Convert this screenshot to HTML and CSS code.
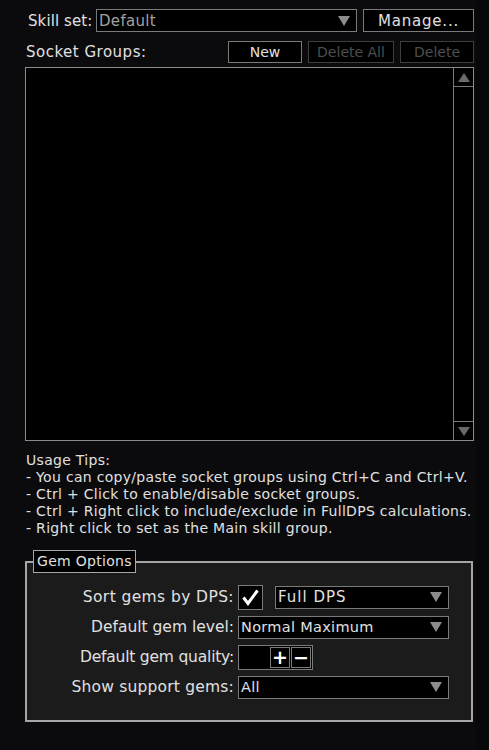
FILE: index.html
```html
<!DOCTYPE html>
<html lang="en">
	<head>
		<meta charset="UTF-8" />
		<title>Skills</title>
		<link rel="stylesheet" href="styles.css">
	</head>
	<body>
		<div class="panel">
			<div class="row top-row">
				<span class="label skill-label">Skill set:</span>
				<div class="dropdown skill-set">
					<span class="dd-text dim">Default</span>
					<span class="arrow"></span>
				</div>
				<button class="btn manage">Manage...</button>
			</div>
			<div class="row groups-row">
				<span class="label groups-label">Socket Groups:</span>
				<div class="spacer"></div>
				<button class="btn new">New</button>
				<button class="btn delete-all" disabled>Delete All</button>
				<button class="btn delete" disabled>Delete</button>
			</div>
			<div class="list">
				<div class="list-body"></div>
				<div class="scrollbar">
					<div class="scroll-btn"><span class="tri up"></span></div>
					<div class="scroll-track"></div>
					<div class="scroll-btn"><span class="tri down"></span></div>
				</div>
			</div>
			<div class="tips">
				<div>Usage Tips:</div>
				<div>- You can copy/paste socket groups using Ctrl+C and Ctrl+V.</div>
				<div>- Ctrl + Click to enable/disable socket groups.</div>
				<div>- Ctrl + Right click to include/exclude in FullDPS calculations.</div>
				<div>- Right click to set as the Main skill group.</div>
			</div>
			<div class="gem-options">
				<div class="legend">Gem Options</div>
				<div class="opt-row">
					<span class="opt-label sort-label">Sort gems by DPS:</span>
					<div class="checkbox">
						<svg width="17" height="17" viewBox="0 0 17 17">
							<polyline points="1.5,8.5 6,14.5 15.5,1.5" fill="none" stroke="#fff" stroke-width="3" />
						</svg>
					</div>
					<div class="dropdown sort-mode">
						<span class="dd-text spaced">Full DPS</span>
						<span class="arrow"></span>
					</div>
				</div>
				<div class="opt-row">
					<span class="opt-label level-label">Default gem level:</span>
					<div class="dropdown wide">
						<span class="dd-text">Normal Maximum</span>
						<span class="arrow"></span>
					</div>
				</div>
				<div class="opt-row">
					<span class="opt-label quality-label">Default gem quality:</span>
					<div class="spin">
						<div class="spin-field"></div>
						<div class="spin-btn">+</div>
						<div class="spin-btn">&minus;</div>
					</div>
				</div>
				<div class="opt-row">
					<span class="opt-label">Show support gems:</span>
					<div class="dropdown wide">
						<span class="dd-text">All</span>
						<span class="arrow"></span>
					</div>
				</div>
			</div>
		</div>
	</body>
</html>
```

FILE: styles.css
```css
* {
	margin: 0;
	padding: 0;
	box-sizing: border-box;
}

body {
	font-family: "DejaVu Sans", "Liberation Sans", sans-serif;
	font-size: 14px;
	background-color: #07080a;
	color: #e0e0e0;
	width: 489px;
	height: 750px;
	overflow: hidden;
}

.panel {
	width: 476px;
	height: 750px;
	background-color: #0b0b0d;
	padding: 9px 0 0 25px;
}

.row {
	display: flex;
	align-items: center;
	width: 449px;
}

.top-row {
	height: 23px;
}

.label {
	white-space: nowrap;
	font-size: 15px;
}

.skill-label {
	width: 71px;
	padding-left: 3px;
	letter-spacing: 0.1px;
}

.groups-row {
	height: 22px;
	margin-top: 9px;
}

.groups-label {
	padding-left: 1px;
	letter-spacing: 0.5px;
}

.spacer {
	flex: 1;
}

.dropdown {
	display: flex;
	align-items: center;
	height: 23px;
	border: 1px solid #7a7a7a;
	background-color: #000;
	padding: 0 6px 0 2px;
}

.dd-text {
	flex: 1;
	white-space: nowrap;
	font-size: 14.5px;
	letter-spacing: 0.3px;
}

.dd-text.dim {
	color: #a0a0a0;
	font-size: 15px;
}

.dd-text.spaced {
	font-size: 15px;
	letter-spacing: 1px;
}

.arrow {
	width: 0;
	height: 0;
	border-left: 6px solid transparent;
	border-right: 6px solid transparent;
	border-top: 10px solid #8c8c8c;
}

.skill-set {
	width: 261px;
}

.btn {
	font-family: inherit;
	font-size: 14px;
	background-color: #000;
	color: #e0e0e0;
	border: 1px solid #7a7a7a;
	height: 23px;
}

.btn:disabled {
	color: #4e4e4e;
	border-color: #3e3e3e;
}

.manage {
	width: 111px;
	margin-left: 6px;
	font-size: 15px;
	letter-spacing: 0.8px;
}

.groups-row .btn {
	height: 22px;
	margin-left: 6px;
}

.new {
	width: 74px;
}

.delete-all {
	width: 86px;
}

.delete {
	width: 74px;
}

.list {
	display: flex;
	width: 449px;
	height: 374px;
	margin-top: 4px;
	border: 1px solid #8a8a8a;
	background-color: #000;
}

.list-body {
	flex: 1;
}

.scrollbar {
	width: 20px;
	display: flex;
	flex-direction: column;
	border-left: 1px solid #7a7a7a;
}

.scroll-btn {
	height: 19px;
	display: flex;
	align-items: center;
	justify-content: center;
}

.scroll-btn:first-child {
	border-bottom: 1px solid #7a7a7a;
}

.scroll-btn:last-child {
	border-top: 1px solid #7a7a7a;
}

.scroll-track {
	flex: 1;
}

.tri {
	width: 0;
	height: 0;
	border-left: 6px solid transparent;
	border-right: 6px solid transparent;
}

.tri.up {
	border-bottom: 9px solid #6a6a6a;
}

.tri.down {
	border-top: 9px solid #6a6a6a;
}

.tips {
	margin-top: 11px;
	line-height: 17px;
	font-size: 14px;
	letter-spacing: 0.3px;
	white-space: nowrap;
	padding-left: 1px;
}

.gem-options {
	position: relative;
	width: 448px;
	height: 161px;
	margin-top: 24px;
	border: 2px solid #a6a6a6;
	background-color: #1b1b1b;
	padding-top: 22px;
}

.legend {
	position: absolute;
	top: -13px;
	left: 6px;
	height: 23px;
	padding: 0 3px;
	background-color: #000;
	border: 1px solid #a6a6a6;
	line-height: 21px;
	letter-spacing: 0.3px;
}

.opt-row {
	display: flex;
	align-items: center;
	height: 24px;
	margin-bottom: 6px;
}

.opt-label {
	width: 211px;
	text-align: right;
	padding-right: 4px;
	white-space: nowrap;
	font-size: 15.5px;
	letter-spacing: 0.2px;
}

.sort-label {
	letter-spacing: 0.4px;
}

.level-label {
	letter-spacing: 0;
}

.quality-label {
	letter-spacing: -0.2px;
}

.checkbox {
	display: flex;
	align-items: center;
	justify-content: center;
	width: 25px;
	height: 25px;
	border: 1px solid #7a7a7a;
	background-color: #000;
}

.sort-mode {
	width: 174px;
	margin-left: 12px;
}

.wide {
	width: 211px;
}

.spin {
	display: flex;
	width: 75px;
	height: 25px;
	border: 1px solid #7a7a7a;
	background-color: #000;
	padding: 1px;
	gap: 1px;
}

.spin-field {
	flex: 1;
}

.spin-btn {
	width: 20px;
	border: 1px solid #7a7a7a;
	color: #fff;
	font-weight: bold;
	font-size: 19px;
	line-height: 19px;
	text-align: center;
}
```
